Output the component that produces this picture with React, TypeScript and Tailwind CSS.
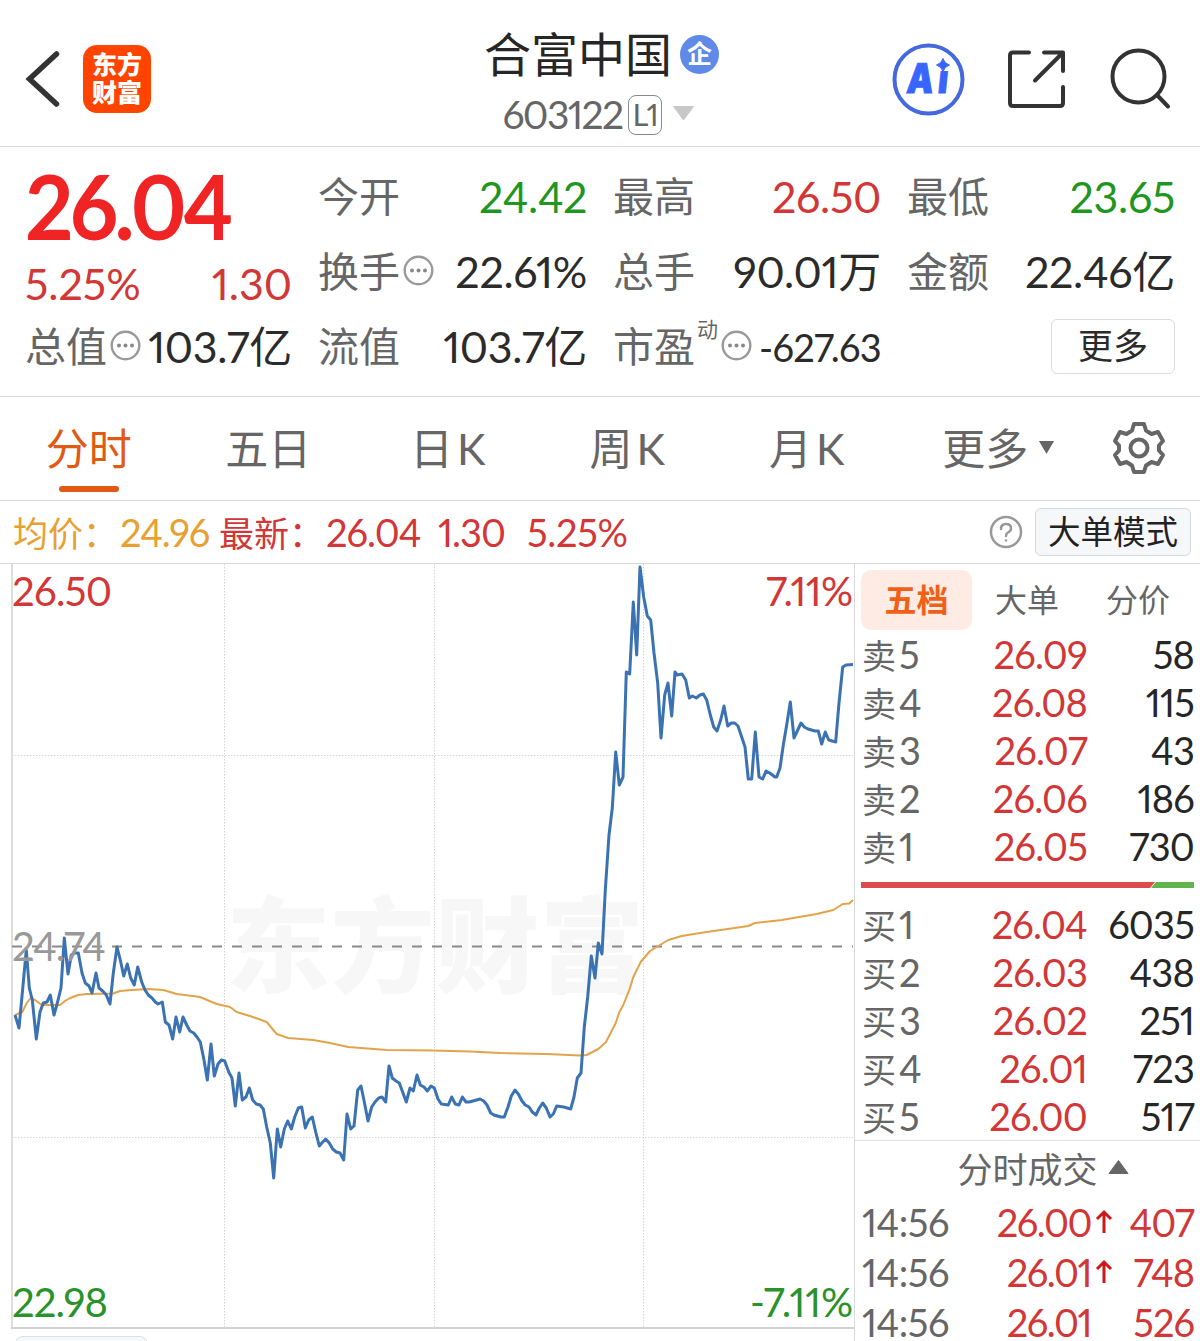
import { ReactNode } from 'react'
import clsx from 'clsx'

interface QuoteCellProps {
  label: string
  value: string
  color?: string
  hint?: boolean
}

interface Level {
  label: string
  price: string
  volume: string
}

const asks: Level[] = [
  { label: '卖5', price: '26.09', volume: '58' },
  { label: '卖4', price: '26.08', volume: '115' },
  { label: '卖3', price: '26.07', volume: '43' },
  { label: '卖2', price: '26.06', volume: '186' },
  { label: '卖1', price: '26.05', volume: '730' },
]

const bids: Level[] = [
  { label: '买1', price: '26.04', volume: '6035' },
  { label: '买2', price: '26.03', volume: '438' },
  { label: '买3', price: '26.02', volume: '251' },
  { label: '买4', price: '26.01', volume: '723' },
  { label: '买5', price: '26.00', volume: '517' },
]

const trades = [
  { time: '14:56', price: '26.00', up: true, volume: '407' },
  { time: '14:56', price: '26.01', up: true, volume: '748' },
  { time: '14:56', price: '26.01', up: false, volume: '526' },
]

const periods = ['分时', '五日', '日K', '周K', '月K']

const priceLine =
  '15,1015 19,1028 22.3,993 26.3,950 29.3,988 32.3,1000 36.3,1039 40,1012 43.3,1003 47,1002 50.3,995 54,1015 57.3,1003 61,988 64.3,938 68,974 71.3,955 75,953 78.3,953 82,973 85.3,983 89,986 92,993 96,973 99,988 102.7,991 106.3,995 110,1004 113.3,973 117,947 120.3,960 123.7,976 127.3,964 130.7,978 134.3,985 137.7,967 141.7,982 145,990 148.3,995 152,998 155.3,1002 158,1004 162.3,1002 165.3,1022 169,1025 172.7,1039 176,1017 179.7,1032 183,1017 186.7,1025 190,1031 193.7,1033 197,1037 200.3,1042 204,1060 207.3,1080 211,1044 214.3,1076 218,1064 221.3,1060 224.7,1061 228.7,1072 232,1078 235.3,1106 239,1073 242.3,1100 246,1097 249.3,1088 252.7,1100 256.3,1104 260,1105 263.3,1109 266.7,1127 270.3,1143 273.7,1178 277.3,1129 280.7,1147 284.3,1129 287.7,1121 291.3,1129 294.7,1117 298.3,1108 301.7,1107 305.3,1128 308.7,1120 312.3,1117 315.7,1132 319.3,1146 322.7,1142 325.7,1139 329.3,1143 332.7,1149 336.3,1152 340,1153 343.7,1160 347,1114 350.7,1129 354,1126 357.7,1090 361,1086 364.3,1102 368,1121 371.7,1107 375,1102 378.7,1098 382,1097 385.7,1102 389,1066 392.3,1078 396,1081 399.3,1083 403,1093 406.3,1102 410,1088 413.3,1091 417,1075 420.3,1085 424,1087 427.3,1091 431,1086 434.3,1088 438,1099 441.3,1104 448.3,1105 451.7,1097 455.3,1104 459,1105 462.3,1097 466,1102 469.3,1102 473,1101 480,1099 483.7,1101 487,1105 490.7,1113 494,1115 501,1117 504.3,1117 508,1107 511.3,1096 515,1090 518.3,1094 522,1101 525.3,1105 529,1107 532.3,1112 536,1115 539.3,1108 542.7,1103 546.3,1108 550,1117 553.3,1114 556.7,1106 563.7,1107 570.7,1109 574,1097 577.3,1078 581,1073 584.3,1027 587.7,997 591.3,956 595,978 598.3,943 602,954 605.3,890 609,835 612.3,808 615.7,752 619.3,785 623,777 626.3,672 629.7,674 633.3,602 636.7,655 640,567 643.7,597 647.3,616 650.7,620 654,653 657.7,683 661,738 664.7,695 668,683 671.7,716 675,672 677.3,675 682,674 685.7,680 689.3,698 692.3,696 696.3,698 700,695 703.3,694 706.7,700 710.3,715 713.7,727 717,731 720.7,720 724,706 727.7,726 731.3,723 734.7,723 738,726 741.7,737 745,747 748.3,779 751.7,779 755.3,732 759,777 762.7,779 766,771 769.7,773 775,777 776.7,777 780,768 783.3,745 787,723 790.3,702 794,738 797.3,731 801,723 804.3,727 808,729 815,731 818.3,731 821.7,744 825.3,732 828.7,740 835.7,742 839,703 842.7,667 846,665 853,664.5'

const averageLine =
  '15,1015 22.3,1012 26.7,1003 30.7,998 35,1000 41.7,1005 60,1005 65,1001 70,998 78.3,995 86.7,994 113.3,993.5 120,991 131.7,990 148.3,989 163.3,990 176.7,994 200,997 216.7,1004 230,1007 236.7,1012 250,1016 266.7,1022 276.7,1034 288.3,1038 313.3,1040 330,1043 348.3,1047 386.7,1050 433.3,1050.5 470,1051.5 500,1053 546.7,1054 580,1055.5 586.7,1055 598.3,1049 606,1042 615.7,1023 619,1013 623.3,1005 630,988 633.3,977 640.7,962 650,951 660,945 668.3,940 681.7,936 700,933 748.3,926 755,923 781.7,920 816.7,914 833.3,910 842.7,904 849.3,903.5 853,900'

function Dots() {
  return (
    <svg className="mb-[3px] ml-[3px] size-[31px] shrink-0" viewBox="0 0 31 31" fill="none">
      <circle cx="15.5" cy="15.5" r="13.8" stroke="#999" strokeWidth="2.4" />
      <circle cx="9" cy="15.5" r="2" fill="#888" />
      <circle cx="15.5" cy="15.5" r="2" fill="#888" />
      <circle cx="22" cy="15.5" r="2" fill="#888" />
    </svg>
  )
}

function QuoteCell({ label, value, color = 'text-[#2b2b2b]', hint }: QuoteCellProps) {
  return (
    <div className="flex items-center">
      <span className="text-[41px] text-[#666]">{label}</span>
      {hint && <Dots />}
      <span className={clsx('ml-auto text-[43px] tracking-[-0.3px]', color)}>{value}</span>
    </div>
  )
}

function Header() {
  return (
    <header className="flex h-[147px] items-center border-b border-[#d8d8d8]">
      <div className="flex w-[400px] items-center pt-3">
        <svg className="ml-6 h-[60px] w-[36px]" viewBox="0 0 36 60" fill="none">
          <path d="M32.5 5 L5.5 30 L32.5 55" stroke="#333" strokeWidth="5.5" strokeLinecap="round" />
        </svg>
        <div className="ml-[23px] flex size-[68px] flex-col items-center justify-center gap-[3px] rounded-[14px] bg-[#ff4400] pb-[2px] text-[25px] font-black text-white">
          <span>东方</span>
          <span>财富</span>
        </div>
      </div>
      <div className="flex w-[400px] flex-col items-center pt-[19px]">
        <div className="flex items-center pl-[3px]">
          <span className="text-[47px] text-[#262626]">合富中国</span>
          <span className="ml-[8px] flex size-[39px] items-center justify-center rounded-full bg-[#5f8ae8] pb-[2px] text-[25px] font-bold text-white">
            企
          </span>
        </div>
        <div className="mt-[17px] mr-[3px] flex items-center">
          <span className="text-[39px] tracking-[-1.6px] text-[#666]">603122</span>
          <span className="ml-[5px] flex h-[40px] w-[34px] items-center justify-center rounded-lg border-[1.5px] border-[#8a8a8a] text-[31px] tracking-[-2px] text-[#666]">
            L1
          </span>
          <svg className="mb-[3px] ml-[10px] h-[15px] w-[23px]" viewBox="0 0 23 15">
            <path d="M1.5 0.5 H21.5 L11.5 14 Z" fill="#c8c8c8" stroke="#c8c8c8" strokeLinejoin="round" />
          </svg>
        </div>
      </div>
      <div className="flex w-[400px] items-center pt-3">
        <svg className="ml-[92px] size-[73px]" viewBox="0 0 73 73">
          <circle cx="36.5" cy="36.5" r="34" fill="none" stroke="#4468dd" strokeWidth="4" />
          <text x="16.5 54.5" y="50" transform="translate(5.5 0) skewX(-6) scale(0.82 1)" fontFamily="Inter" fontSize="41" fontWeight="900" fill="#3866fa" stroke="#3866fa">
            Ai
          </text>
          <rect x="43" y="15" width="17" height="13" fill="#fff" />
          <path d="M51 15.5 Q52.5 20.500 57.5 22 Q52.500 23.500 51 28.5 Q49.500 23.500 44.500 22 Q49.500 20.500 51 15.5 Z" fill="#3866fa" stroke="#3866fa" strokeLinejoin="round" />
        </svg>
        <svg className="ml-[42px] size-[60px]" viewBox="0 0 60 60" fill="none" stroke="#333" strokeWidth="4" strokeLinecap="round" strokeLinejoin="round">
          <path d="M22 3.500 H6 Q3 3.500 3 6.500 V54 Q3 57 6 57 H53 Q56 57 56 54 V38" />
          <path d="M37 3.500 H56 V22 M55 4.500 L28 31.500" />
        </svg>
        <svg className="ml-[43px] size-[62px]" viewBox="0 0 62 62" fill="none" stroke="#333" strokeWidth="4" strokeLinecap="round">
          <circle cx="28.500" cy="28.500" r="26" />
          <path d="M47 47 L58 58.500" />
        </svg>
      </div>
    </header>
  )
}

function Quote() {
  return (
    <section className="grid h-[250px] grid-cols-[267px_269px_268px_268px] grid-rows-[75px_75px_75px] gap-x-[26px] border-b border-[#d8d8d8] pt-[12px] pl-[25px]">
      <div className="row-span-2 flex flex-col">
        <span className="mt-px w-[230px] origin-left scale-x-[0.94] text-[90px] font-bold tracking-[-4px] text-[#f02424]">26.04</span>
        <div className="mt-[12px] flex justify-between text-[43px] text-[#d23636]">
          <span>5.25%</span>
          <span>1.30</span>
        </div>
      </div>
      <QuoteCell label="今开" value="24.42" color="text-[#1f961f]" />
      <QuoteCell label="最高" value="26.50" color="text-[#d23636]" />
      <QuoteCell label="最低" value="23.65" color="text-[#1f961f]" />
      <QuoteCell label="换手" value="22.61%" hint />
      <QuoteCell label="总手" value="90.01万" />
      <QuoteCell label="金额" value="22.46亿" />
      <QuoteCell label="总值" value="103.7亿" hint />
      <QuoteCell label="流值" value="103.7亿" />
      <div className="flex items-center">
        <span className="text-[41px] text-[#666]">市盈</span>
        <span className="mb-[37px] ml-[2px] text-[21px] text-[#666]">动</span>
        <Dots />
        <span className="ml-auto text-[38px] tracking-[-0.7px] text-[#2b2b2b]">-627.63</span>
      </div>
      <div className="flex items-center justify-end">
        <button className="mb-px h-[55px] w-[124px] rounded-md border border-[#dcdcdc] pb-px text-[35px] leading-none text-[#2b2b2b]">
          更多
        </button>
      </div>
    </section>
  )
}

function Tab({ active, children }: { active?: boolean; children: ReactNode }) {
  return (
    <div className={clsx('flex w-[179.500px] flex-col items-center text-[43px]', active ? 'text-[#e05a14]' : 'text-[#666]')}>
      <span className="mt-[30px] flex items-center">{children}</span>
      {active && <span className="mt-[16px] h-[6px] w-[60px] rounded-full bg-[#e05a14]" />}
    </div>
  )
}

function Periods() {
  return (
    <nav className="-mx-px flex h-[104px] border-b border-[#d8d8d8]">
      {periods.map((p, i) => (
        <Tab key={p} active={i === 0}>
          {p.endsWith('K') ? (
            <>
              {p[0]}
              <span className="ml-1">K</span>
            </>
          ) : (
            p
          )}
        </Tab>
      ))}
      <Tab>
        <span className="ml-6">更多</span>
        <svg className="mb-[2px] ml-[11px] h-[13px] w-[15px]" viewBox="0 0 15 13">
          <path d="M0 0 H15 L7.500 13 Z" fill="#666" />
        </svg>
      </Tab>
      <svg className="mt-[24px] ml-[36px] size-[54px]" viewBox="0 0 54 54" fill="none" stroke="#666" strokeWidth="4" strokeLinejoin="round">
        <path d="M22 3 H32 L34 9.500 L39.500 13 L46 11 L51 20 L47 24.500 V29.500 L51 34 L46 43 L39.500 41 L34 44.500 L32 51 H22 L20 44.500 L14.500 41 L8 43 L3 34 L7 29.500 V24.500 L3 20 L8 11 L14.500 13 L20 9.500 Z" />
        <circle cx="27" cy="27" r="8.500" />
      </svg>
    </nav>
  )
}

function Summary() {
  return (
    <div className="flex h-[63px] items-center border-b border-[#d8d8d8] pr-[9px] pl-[13px] text-[38px] tracking-[-1px] text-[#d23636]">
      <span className="flex w-[206px] items-baseline text-[#e8a033]">
        <span className="w-[107px] text-[35px] tracking-normal">均价：</span>24.96
      </span>
      <span className="flex w-[219px] items-baseline">
        <span className="w-[107px] text-[35px] tracking-normal">最新：</span>26.04
      </span>
      <span className="w-[89px]">1.30</span>
      <span className="tracking-[-0.3px]">5.25%</span>
      <svg className="ml-auto size-[34px]" viewBox="0 0 34 34" fill="none" stroke="#999" strokeWidth="2.500" strokeLinecap="round">
        <circle cx="17" cy="17" r="15" />
        <path d="M12 14 Q12 9 17 9 Q22 9 22 13.500 Q22 16 19 17.500 Q17 18.500 17 21" />
        <path d="M17 25.500 V25.600" />
      </svg>
      <button className="ml-[12px] h-[48px] w-[156px] rounded-md border border-[#d6d9de] bg-[#f6f7f9] text-[32.500px] leading-none tracking-normal text-[#222]">
        大单模式
      </button>
    </div>
  )
}

// The viewBox keeps the same units as the page, so the series are plain pixel pairs.
function Chart() {
  return (
    <div className="flex w-[854px] flex-col">
      <svg className="ml-[11px] h-[765px] w-[843px]" viewBox="11 564 843 765" fill="none" fontFamily="Lato" fontSize="40">
        <text x="226" y="985" fontFamily="Noto Sans CJK SC" fontSize="104" fontWeight="900" fill="#f7f7f7" textLength="418">
          东方财富
        </text>
        <g stroke="#d4d4d4" strokeDasharray="1.500 1.500">
          <path d="M224.500 564 V1327 M434.500 564 V1327 M643.500 564 V1327" />
          <path d="M12 755.500 H853 M12 1137.500 H853" />
        </g>
        <path d="M12 564 V1328" stroke="#dedede" strokeWidth="2" />
        <path d="M11 1328 H854" stroke="#d2d2d2" strokeWidth="2" />
        <path d="M12 946.500 H853" stroke="#8a8a8a" strokeWidth="2" strokeDasharray="10 10" />
        <polyline points={averageLine} stroke="#e2a34c" strokeWidth="2" strokeLinejoin="round" />
        <polyline points={priceLine} stroke="#3a72b2" strokeWidth="3" strokeLinejoin="round" />
        <text x="12" y="606" fill="#d23636" textLength="100">26.50</text>
        <text x="766" y="606" fill="#d23636" textLength="87">7.11%</text>
        <text x="12" y="961" fill="#999" textLength="94">24.74</text>
        <text x="12" y="1317" fill="#2a922a" textLength="96">22.98</text>
        <text x="750" y="1317" fill="#2a922a" textLength="103">-7.11%</text>
      </svg>
      <div className="mt-[7px] ml-[15px] h-[40px] w-[133px] rounded-lg border border-[#dcdfe3] bg-[#f6f7f9]" />
    </div>
  )
}

function LevelRow({ label, price, volume }: Level) {
  return (
    <div className="flex h-[48px] items-center pb-[2px] text-[38px] tracking-[-0.8px]">
      <span className="flex w-[110px] items-baseline text-[#666]">
        <span className="w-[37px] text-[34px]">{label[0]}</span>
        {label[1]}
      </span>
      <span className="w-[115px] text-right text-[#d23636]">{price}</span>
      <span className="ml-auto text-[#262626]">{volume}</span>
    </div>
  )
}

function OrderBook() {
  return (
    <aside className="w-[346px] border-l border-[#d8d8d8]">
      <div className="flex px-[6px] pt-[6px] text-[32px] text-[#666]">
        <span className="flex h-[60px] w-[111px] items-center justify-center rounded-[10px] bg-[#feebe3] pb-px font-bold text-[#f06018]">
          五档
        </span>
        <span className="flex w-[110px] items-center justify-center pb-px">大单</span>
        <span className="flex w-[112px] items-center justify-center pb-px">分价</span>
      </div>
      <div className="mt-[1px] pr-[6px] pl-[7px]">
        {asks.map((l) => (
          <LevelRow key={l.label} {...l} />
        ))}
      </div>
      <svg className="mt-[11px] ml-[6px] h-[6px] w-[333px]" viewBox="0 0 333 6">
        <path d="M0 0 H294 L289 6 H0 Z" fill="#dd4c4c" />
        <path d="M295 0 H333 V6 H290 Z" fill="#62b44c" />
      </svg>
      <div className="mt-[13px] pr-[6px] pl-[7px]">
        {bids.map((l) => (
          <LevelRow key={l.label} {...l} />
        ))}
      </div>
      <div className="-mt-px flex h-[57px] items-center justify-center border-t border-[#e2e2e2] pl-[31px] text-[35px] text-[#666]">
        分时成交
        <svg className="mb-[4px] ml-[10px] h-[14px] w-[21px]" viewBox="0 0 21 14">
          <path d="M10.500 0.500 L20 13.500 H1 Z" fill="#666" stroke="#666" strokeLinejoin="round" />
        </svg>
      </div>
      {trades.map((t, i) => (
        <div key={i} className="flex h-[50px] items-center pr-[6px] pl-[7px] text-[38px] tracking-[-1px] text-[#d23636]">
          <span className="w-[100px] tracking-[-0.5px] text-[#666]">{t.time}</span>
          <span className="w-[129px] text-right tracking-[-1.5px]">{t.price}</span>
          {t.up && (
            <svg className="mb-[3px] ml-[4px] h-[24px] w-[18px]" viewBox="0 0 18 24" fill="none" stroke="#cc1818" strokeWidth="3">
              <path d="M9 24 V3 M2 10 L9 3 L16 10" />
            </svg>
          )}
          <span className="ml-auto">{t.volume}</span>
        </div>
      ))}
    </aside>
  )
}

export default function App() {
  return (
    <div className="h-[1341px] w-[1200px] overflow-hidden bg-white font-['Lato','Noto_Sans_CJK_SC',sans-serif] leading-none proportional-nums">
      <Header />
      <Quote />
      <Periods />
      <Summary />
      <div className="flex">
        <Chart />
        <OrderBook />
      </div>
    </div>
  )
}
